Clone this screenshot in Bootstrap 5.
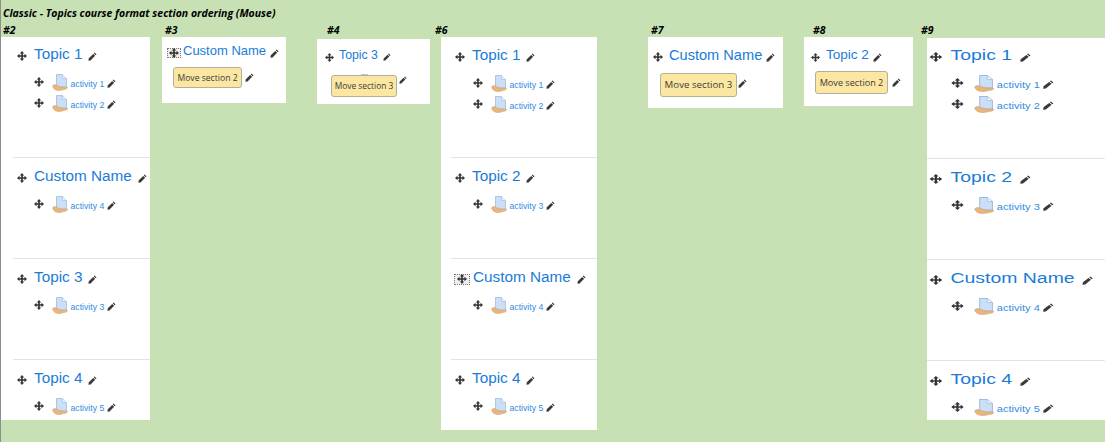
<!DOCTYPE html>
<html lang="en"><head><meta charset="utf-8"><title>Topics course format section ordering</title>
<link rel="stylesheet" href="https://cdn.jsdelivr.net/npm/bootstrap@5.3.0/dist/css/bootstrap.min.css">
<style>
html,body{margin:0;height:442px;overflow:hidden}
body{background:#c7e0b4;font-family:"Open Sans","DejaVu Sans",sans-serif;color:#000;border-left:1px solid #8d8d8d}
.cap{font-family:"Open Sans",sans-serif;font-style:italic;font-weight:700;font-size:10.5px;line-height:14px;white-space:nowrap;color:#000}
.ttl{padding:6px 0 0 2px;height:22px}
.stage{display:flex;align-items:flex-start;height:420px;overflow:hidden}
.shot{flex:none;display:flex;flex-direction:column}
.lbl{height:15px;padding-top:1px}
.pane{background:#fff;overflow:hidden;position:relative}
.s2{width:149px}.s2 .lbl{padding-left:2px}.s2 .pane{height:383px;--hx:16px;--ax:33px;--rx:12px}
.s3{width:124px;margin-left:12px}.s3 .lbl{padding-left:3px}.s3 .pane{height:66px}
.s4{width:113px;margin-left:31px}.s4 .lbl{padding-left:10px;height:17px}.s4 .pane{height:65px}
.s6{width:156px;margin-left:11px}.s6 .lbl{margin-left:-6px}.s6 .pane{height:393px;--hx:14px;--ax:32px;--rx:10px}
.s7{width:135px;margin-left:51px}.s7 .lbl{padding-left:3px}.s7 .pane{height:71px}
.s8{width:109px;margin-left:21px}.s8 .lbl{padding-left:9px}.s8 .pane{height:69px}
.s9{width:178px;margin-left:14px}.s9 .lbl{margin-left:-6px;height:16px}.s9 .pane{height:382px;--hx:1.5px;--ax:18.5px;--rx:0px}
.wide{width:140.2px;transform:scaleX(1.27);transform-origin:0 0}
.sect{height:101px;margin-left:var(--rx);padding-left:calc(var(--hx) - var(--rx));border-top:1px solid #e2e2e8}
.sect:first-child{height:120px;border-top:0}
.sect .act{margin-left:calc(var(--ax) - var(--hx))}
.head{display:flex;align-items:center;height:28px;padding-top:8px}
.s2 .sect:first-child .head,.s9 .sect:first-child .head{height:27px;padding-top:7px}
.head a,.act a{color:#1a7cd6;text-decoration:none;white-space:nowrap;font-family:"Liberation Sans",sans-serif}
.head a{font-size:15.3px;line-height:20px}
.act a{color:#348ce0;font-size:8.7px;line-height:14px}
.mv,.pen,.doc{flex:none;display:block}
.head .mv{margin:4px 7px 0 0}
.head .pen{margin:4px 0 0 6px}
.act{display:flex;align-items:center;height:21px}
.head+.act{margin-top:9px}
.act .mv{margin-top:-3px}
.act .doc{margin:-3px 2.5px 0 8px}
.act .pen{margin:0 0 0 2.5px}
.tip{flex:none;display:flex;align-items:center;justify-content:center;background:#fbe7a1;border:1px solid #b3b09a;border-radius:3px;line-height:12px;color:#3c3c3c;white-space:nowrap}
.drag{flex:none;display:flex;align-items:center;justify-content:center;border:1px dotted #777;background:#efefef}
.hd3{height:24px;padding:4px 0 0 5px}.hd3 a{font-size:13px}.hd3 .pen{margin-left:4px}
.drag3{width:14px;height:10px;margin:4px 2px 0 0}
.r3{display:flex;align-items:center;margin:6px 0 0 11px}
.r3 .tip{width:69px;height:21px;font-size:8.6px}.r3 .pen{margin-left:3px}
.hd4{height:26px;padding:6px 0 0 8px}.hd4 a{font-size:12.3px}.hd4 .mv{margin-right:5px}.hd4 .pen{margin-left:5px}
.r4{display:flex;align-items:center;height:22px;margin:7px 0 0 22px;position:relative}
.r4 .doc{margin:-1px 0 0 9px}.r4 .mv{margin-top:-4px}.r4 .pen{margin:-6px 0 0 26px}
.r4 .tip{position:absolute;left:-8px;top:3px;width:66px;height:22px;font-size:8.4px}
.hd7{height:28px;padding:8px 0 0 5px}.hd7 a{font-size:14.6px}.hd7 .mv{margin-right:6px}.hd7 .pen{margin-left:4px}
.r7{display:flex;align-items:center;margin:8px 0 0 12px}
.r7 .tip{width:77px;height:24px;font-size:9.7px}.r7 .pen{margin:-4px 0 0 1px}
.hd8{height:28px;padding:8px 0 0 7px}.hd8 a{font-size:13.5px}.hd8 .mv{margin-right:6px}.hd8 .pen{margin-left:4px}
.r8{display:flex;align-items:center;margin:6px 0 0 11px}
.r8 .tip{width:73px;height:23px;font-size:9.1px}.r8 .pen{margin-left:4px}
.drag6{width:16px;height:11px;margin:4px 3px 0 -1px}
.sect .drag6+a{line-height:20px}
</style></head><body>
<svg width="0" height="0" class="position-absolute" aria-hidden="true"><defs>
<symbol id="mv" viewBox="0 0 12 12"><path d="M6 0 8.6 3H7V5H9V3.4L12 6 9 8.6V7H7V9H8.6L6 12 3.4 9H5V7H3V8.6L0 6 3 3.4V5H5V3H3.4Z" fill="#333"/></symbol>
<symbol id="pen" viewBox="0 0 12 12"><path d="M8.8.6 11.4 3.2 10.2 4.4 7.6 1.8ZM6.9 2.5 9.5 5.1 3.4 11.2.6 11.6 1 8.4Z" fill="#3a3a3a"/></symbol>
<symbol id="doc" viewBox="0 0 16 17"><path d="M4.5.5H10.5L14.5 4.5V13H4.5Z" fill="#cbe0f7" stroke="#9dbbe0" stroke-width=".8"/><path d="M10.5.5V4.5H14.5" fill="#eaf3fc" stroke="#9dbbe0" stroke-width=".6"/><path d="M.5 12C1.5 10.2 3.5 10 5.5 11.5L9 13 15.5 13.2C15.8 14.6 14 15.2 12 15.6L8 16.6C4.5 17 1.2 15.2.5 12Z" fill="#e8b57e" stroke="#c9975f" stroke-width=".4"/></symbol>
</defs></svg>
<div class="cap ttl">Classic - Topics course format section ordering (Mouse)</div>
<div class="stage">

<div class="shot s2"><div class="cap lbl">#2</div><div class="pane">
<div class="sect"><div class="head"><svg class="mv" width="10" height="10"><use href="#mv"/></svg><a href="#">Topic 1</a><svg class="pen" width="9" height="9"><use href="#pen"/></svg></div>
<div class="act"><svg class="mv" width="10" height="10"><use href="#mv"/></svg><svg class="doc" width="16" height="17"><use href="#doc"/></svg><a href="#">activity 1</a><svg class="pen" width="9" height="9"><use href="#pen"/></svg></div>
<div class="act"><svg class="mv" width="10" height="10"><use href="#mv"/></svg><svg class="doc" width="16" height="17"><use href="#doc"/></svg><a href="#">activity 2</a><svg class="pen" width="9" height="9"><use href="#pen"/></svg></div></div>
<div class="sect"><div class="head"><svg class="mv" width="10" height="10"><use href="#mv"/></svg><a href="#">Custom Name</a><svg class="pen" width="9" height="9"><use href="#pen"/></svg></div>
<div class="act"><svg class="mv" width="10" height="10"><use href="#mv"/></svg><svg class="doc" width="16" height="17"><use href="#doc"/></svg><a href="#">activity 4</a><svg class="pen" width="9" height="9"><use href="#pen"/></svg></div></div>
<div class="sect"><div class="head"><svg class="mv" width="10" height="10"><use href="#mv"/></svg><a href="#">Topic 3</a><svg class="pen" width="9" height="9"><use href="#pen"/></svg></div>
<div class="act"><svg class="mv" width="10" height="10"><use href="#mv"/></svg><svg class="doc" width="16" height="17"><use href="#doc"/></svg><a href="#">activity 3</a><svg class="pen" width="9" height="9"><use href="#pen"/></svg></div></div>
<div class="sect"><div class="head"><svg class="mv" width="10" height="10"><use href="#mv"/></svg><a href="#">Topic 4</a><svg class="pen" width="9" height="9"><use href="#pen"/></svg></div>
<div class="act"><svg class="mv" width="10" height="10"><use href="#mv"/></svg><svg class="doc" width="16" height="17"><use href="#doc"/></svg><a href="#">activity 5</a><svg class="pen" width="9" height="9"><use href="#pen"/></svg></div></div>
</div></div>

<div class="shot s3"><div class="cap lbl">#3</div><div class="pane">
<div class="head hd3"><span class="drag drag3"><svg width="10" height="10"><use href="#mv"/></svg></span><a href="#">Custom Name</a><svg class="pen" width="9" height="9"><use href="#pen"/></svg></div>
<div class="r3"><span class="tip">Move section 2</span><svg class="pen" width="9" height="9"><use href="#pen"/></svg></div>
</div></div>

<div class="shot s4"><div class="cap lbl">#4</div><div class="pane">
<div class="head hd4"><svg class="mv" width="9" height="9"><use href="#mv"/></svg><a href="#">Topic 3</a><svg class="pen" width="8" height="8"><use href="#pen"/></svg></div>
<div class="r4"><svg class="mv" width="9" height="9"><use href="#mv"/></svg><svg class="doc" width="16" height="17"><use href="#doc"/></svg><svg class="pen" width="8" height="8"><use href="#pen"/></svg><span class="tip">Move section 3</span></div>
</div></div>

<div class="shot s6"><div class="cap lbl">#6</div><div class="pane">
<div class="sect"><div class="head"><svg class="mv" width="10" height="10"><use href="#mv"/></svg><a href="#">Topic 1</a><svg class="pen" width="9" height="9"><use href="#pen"/></svg></div>
<div class="act"><svg class="mv" width="10" height="10"><use href="#mv"/></svg><svg class="doc" width="16" height="17"><use href="#doc"/></svg><a href="#">activity 1</a><svg class="pen" width="9" height="9"><use href="#pen"/></svg></div>
<div class="act"><svg class="mv" width="10" height="10"><use href="#mv"/></svg><svg class="doc" width="16" height="17"><use href="#doc"/></svg><a href="#">activity 2</a><svg class="pen" width="9" height="9"><use href="#pen"/></svg></div></div>
<div class="sect"><div class="head"><svg class="mv" width="10" height="10"><use href="#mv"/></svg><a href="#">Topic 2</a><svg class="pen" width="9" height="9"><use href="#pen"/></svg></div>
<div class="act"><svg class="mv" width="10" height="10"><use href="#mv"/></svg><svg class="doc" width="16" height="17"><use href="#doc"/></svg><a href="#">activity 3</a><svg class="pen" width="9" height="9"><use href="#pen"/></svg></div></div>
<div class="sect"><div class="head"><span class="drag drag6"><svg width="10" height="10"><use href="#mv"/></svg></span><a href="#">Custom Name</a><svg class="pen" width="9" height="9"><use href="#pen"/></svg></div>
<div class="act"><svg class="mv" width="10" height="10"><use href="#mv"/></svg><svg class="doc" width="16" height="17"><use href="#doc"/></svg><a href="#">activity 4</a><svg class="pen" width="9" height="9"><use href="#pen"/></svg></div></div>
<div class="sect"><div class="head"><svg class="mv" width="10" height="10"><use href="#mv"/></svg><a href="#">Topic 4</a><svg class="pen" width="9" height="9"><use href="#pen"/></svg></div>
<div class="act"><svg class="mv" width="10" height="10"><use href="#mv"/></svg><svg class="doc" width="16" height="17"><use href="#doc"/></svg><a href="#">activity 5</a><svg class="pen" width="9" height="9"><use href="#pen"/></svg></div></div>
</div></div>

<div class="shot s7"><div class="cap lbl">#7</div><div class="pane">
<div class="head hd7"><svg class="mv" width="10" height="10"><use href="#mv"/></svg><a href="#">Custom Name</a><svg class="pen" width="9" height="9"><use href="#pen"/></svg></div>
<div class="r7"><span class="tip">Move section 3</span><svg class="pen" width="9" height="9"><use href="#pen"/></svg></div>
</div></div>

<div class="shot s8"><div class="cap lbl">#8</div><div class="pane">
<div class="head hd8"><svg class="mv" width="9" height="9"><use href="#mv"/></svg><a href="#">Topic 2</a><svg class="pen" width="9" height="9"><use href="#pen"/></svg></div>
<div class="r8"><span class="tip">Move section 2</span><svg class="pen" width="9" height="9"><use href="#pen"/></svg></div>
</div></div>

<div class="shot s9"><div class="cap lbl">#9</div><div class="pane"><div class="wide">
<div class="sect"><div class="head"><svg class="mv" width="10" height="10"><use href="#mv"/></svg><a href="#">Topic 1</a><svg class="pen" width="9" height="9"><use href="#pen"/></svg></div>
<div class="act"><svg class="mv" width="10" height="10"><use href="#mv"/></svg><svg class="doc" width="16" height="17"><use href="#doc"/></svg><a href="#">activity 1</a><svg class="pen" width="9" height="9"><use href="#pen"/></svg></div>
<div class="act"><svg class="mv" width="10" height="10"><use href="#mv"/></svg><svg class="doc" width="16" height="17"><use href="#doc"/></svg><a href="#">activity 2</a><svg class="pen" width="9" height="9"><use href="#pen"/></svg></div></div>
<div class="sect"><div class="head"><svg class="mv" width="10" height="10"><use href="#mv"/></svg><a href="#">Topic 2</a><svg class="pen" width="9" height="9"><use href="#pen"/></svg></div>
<div class="act"><svg class="mv" width="10" height="10"><use href="#mv"/></svg><svg class="doc" width="16" height="17"><use href="#doc"/></svg><a href="#">activity 3</a><svg class="pen" width="9" height="9"><use href="#pen"/></svg></div></div>
<div class="sect"><div class="head"><svg class="mv" width="10" height="10"><use href="#mv"/></svg><a href="#">Custom Name</a><svg class="pen" width="9" height="9"><use href="#pen"/></svg></div>
<div class="act"><svg class="mv" width="10" height="10"><use href="#mv"/></svg><svg class="doc" width="16" height="17"><use href="#doc"/></svg><a href="#">activity 4</a><svg class="pen" width="9" height="9"><use href="#pen"/></svg></div></div>
<div class="sect"><div class="head"><svg class="mv" width="10" height="10"><use href="#mv"/></svg><a href="#">Topic 4</a><svg class="pen" width="9" height="9"><use href="#pen"/></svg></div>
<div class="act"><svg class="mv" width="10" height="10"><use href="#mv"/></svg><svg class="doc" width="16" height="17"><use href="#doc"/></svg><a href="#">activity 5</a><svg class="pen" width="9" height="9"><use href="#pen"/></svg></div></div>
</div></div></div>

</div>
</body></html>
